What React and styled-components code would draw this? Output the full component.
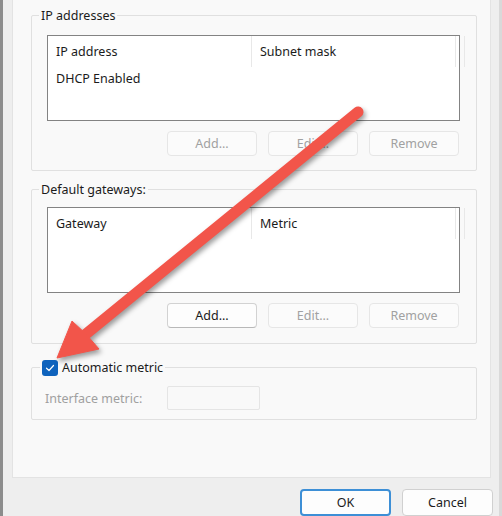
import React from "react";
import styled, { createGlobalStyle } from "styled-components";

const Global = createGlobalStyle`
  html, body { margin: 0; padding: 0; background: #eeeeee; }
  body { font-family: "Noto Sans", "Liberation Sans", sans-serif; font-size: 12.5px; color: #1b1b1b; }
  * { box-sizing: border-box; }
`;

const Window = styled.div`
  position: relative;
  width: 502px;
  height: 516px;
  overflow: hidden;
  background: #eeeeee;
  border-left: 3px solid #8c8c8c;
  border-right: 3px solid #d9d9d9;
  display: flex;
  flex-direction: column;

  &::before {
    content: "";
    position: absolute;
    left: -3px;
    top: 465px;
    width: 3px;
    height: 51px;
    background: linear-gradient(to bottom, #222026, #2b2038);
  }
`;

const Panel = styled.div`
  margin-left: 9px;
  width: 479px;
  height: 478px;
  flex-shrink: 0;
  background: #f9f9f9;
  border: 1px solid #e3e3e3;
  border-top: none;
  padding: 15px 13px 0 18px;
  display: flex;
  flex-direction: column;
`;

const Group = styled.div`
  position: relative;
  border: 1px solid #e0e0e0;
  border-radius: 2px;
  padding: ${(p) => p.$top}px 16px ${(p) => p.$bottom}px 15px;
  margin-top: ${(p) => p.$gap || 0}px;
  display: flex;
  flex-direction: column;
`;

const Legend = styled.div`
  position: absolute;
  top: -9px;
  left: ${(p) => p.$left || 7}px;
  padding: 0 2px;
  background: #f9f9f9;
  line-height: 17px;
  color: #1b1b1b;
  display: flex;
  align-items: center;
  gap: 4px;
`;

const ListBox = styled.div`
  height: 86px;
  background: #ffffff;
  border: 1px solid #838383;
  display: flex;
  flex-direction: column;
`;

const HeaderRow = styled.div`
  display: grid;
  grid-template-columns: 204px 204px 1fr;
  height: 31px;
`;

const HeaderCell = styled.div`
  display: flex;
  align-items: center;
  padding-left: 8px;
  border-right: 1px solid #e8e8e8;
  color: #1b1b1b;
`;

const Row = styled.div`
  height: 22px;
  display: flex;
  align-items: center;
  padding-left: 8px;
`;

const ButtonRow = styled.div`
  display: flex;
  justify-content: flex-end;
  gap: 11px;
  margin-top: 10px;
  padding-right: 1px;
`;

const Button = styled.button`
  width: 90px;
  height: 25px;
  font-family: inherit;
  font-size: 12.5px;
  border-radius: 4px;
  background: ${(p) => (p.disabled ? "#fbfbfb" : "#fdfdfd")};
  color: ${(p) => (p.disabled ? "#a1a1a1" : "#1b1b1b")};
  border: 1px solid ${(p) => (p.disabled ? "#e6e6e6" : "#d2d2d2")};
  border-bottom-color: ${(p) => (p.disabled ? "#e6e6e6" : "#b8b8b8")};
  padding: 0;
  cursor: default;
`;

const MetricRow = styled.div`
  display: flex;
  align-items: center;
`;

const MetricLabel = styled.span`
  width: 122px;
  color: #a0a0a0;
  margin-left: -2px;
`;

const TextBox = styled.div`
  width: 93px;
  height: 24px;
  border: 1px solid #e5e5e5;
  background: #f9f9f9;
  border-radius: 2px;
`;

const CheckBox = styled.span`
  width: 16px;
  height: 16px;
  border-radius: 3px;
  background: #0f63bd;
  display: inline-flex;
  align-items: center;
  justify-content: center;
`;

const Footer = styled.div`
  display: flex;
  justify-content: flex-end;
  gap: 11px;
  margin-top: 11px;
  padding-right: 6px;
`;

const DialogButton = styled.button`
  width: 91px;
  height: 27px;
  font-family: inherit;
  font-size: 12.5px;
  color: #1b1b1b;
  background: #fdfdfd;
  border-radius: 4px;
  border: ${(p) => (p.$primary ? "2px solid #3d8fd6" : "1px solid #d0d0d0")};
  padding: 0;
`;

const ArrowLayer = styled.svg`
  position: absolute;
  left: -3px;
  top: 0;
  width: 502px;
  height: 516px;
  pointer-events: none;
  filter: drop-shadow(2px 3px 2.5px rgba(0, 0, 0, 0.38));
`;

export default function App() {
  return (
    <>
      <Global />
      <Window>
        <Panel>
          <Group $top={19} $bottom={14}>
            <Legend>IP addresses</Legend>
            <ListBox>
              <HeaderRow>
                <HeaderCell>IP address</HeaderCell>
                <HeaderCell>Subnet mask</HeaderCell>
                <HeaderCell />
              </HeaderRow>
              <Row>DHCP Enabled</Row>
            </ListBox>
            <ButtonRow>
              <Button disabled>Add...</Button>
              <Button disabled>Edit...</Button>
              <Button disabled>Remove</Button>
            </ButtonRow>
          </Group>

          <Group $top={17} $bottom={15} $gap={18}>
            <Legend>Default gateways:</Legend>
            <ListBox>
              <HeaderRow>
                <HeaderCell>Gateway</HeaderCell>
                <HeaderCell>Metric</HeaderCell>
                <HeaderCell />
              </HeaderRow>
            </ListBox>
            <ButtonRow>
              <Button>Add...</Button>
              <Button disabled>Edit...</Button>
              <Button disabled>Remove</Button>
            </ButtonRow>
          </Group>

          <Group $top={18} $bottom={9} $gap={23}>
            <Legend $left={8}>
              <CheckBox>
                <svg width="10" height="10" viewBox="0 0 10 10">
                  <polyline points="1.5,5.2 4,7.5 8.5,2.5" fill="none" stroke="#ffffff" strokeWidth="1.2" strokeLinecap="round" strokeLinejoin="round" />
                </svg>
              </CheckBox>
              Automatic metric
            </Legend>
            <MetricRow>
              <MetricLabel>Interface metric:</MetricLabel>
              <TextBox />
            </MetricRow>
          </Group>
        </Panel>
        <Footer>
          <DialogButton $primary>OK</DialogButton>
          <DialogButton>Cancel</DialogButton>
        </Footer>
        <ArrowLayer viewBox="0 0 502 516">
          <line x1="358" y1="112" x2="86" y2="334" stroke="#f2554a" strokeWidth="11" strokeLinecap="round" />
          <polygon points="57,358 72,321 86,334 99,349" fill="#f2554a" strokeLinejoin="round" stroke="#f2554a" strokeWidth="1" />
        </ArrowLayer>
      </Window>
    </>
  );
}
